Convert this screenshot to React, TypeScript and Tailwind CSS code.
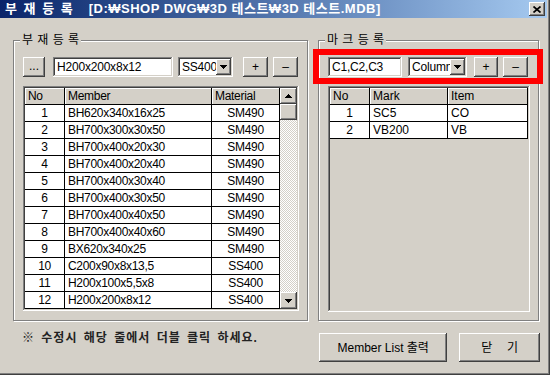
import React from "react"

const raised =
  "bg-[#d4d0c8] shadow-[inset_-1px_-1px_#404040,inset_1px_1px_#fff,inset_-2px_-2px_#808080,inset_2px_2px_#d4d0c8]"
const sunken =
  "shadow-[inset_-1px_-1px_#fff,inset_1px_1px_#808080,inset_-2px_-2px_#d4d0c8,inset_2px_2px_#404040]"
const etched = "border border-[#808080] shadow-[inset_1px_1px_#fff,1px_1px_#fff]"

const members = [
  ["1", "BH620x340x16x25", "SM490"],
  ["2", "BH700x300x30x50", "SM490"],
  ["3", "BH700x400x20x30", "SM490"],
  ["4", "BH700x400x20x40", "SM490"],
  ["5", "BH700x400x30x40", "SM490"],
  ["6", "BH700x400x30x50", "SM490"],
  ["7", "BH700x400x40x50", "SM490"],
  ["8", "BH700x400x40x60", "SM490"],
  ["9", "BX620x340x25", "SM490"],
  ["10", "C200x90x8x13,5", "SS400"],
  ["11", "H200x100x5,5x8", "SS400"],
  ["12", "H200x200x8x12", "SS400"],
]

const marks = [
  ["1", "SC5", "CO"],
  ["2", "VB200", "VB"],
]

const Arrow = ({ up }: { up?: boolean }) => (
  <svg width="7" height="4" viewBox="0 0 7 4" shapeRendering="crispEdges">
    {up ? (
      <>
        <rect x="3" y="0" width="1" height="1" />
        <rect x="2" y="1" width="3" height="1" />
        <rect x="1" y="2" width="5" height="1" />
        <rect x="0" y="3" width="7" height="1" />
      </>
    ) : (
      <>
        <rect x="0" y="0" width="7" height="1" />
        <rect x="1" y="1" width="5" height="1" />
        <rect x="2" y="2" width="3" height="1" />
        <rect x="3" y="3" width="1" height="1" />
      </>
    )}
  </svg>
)

const Btn = ({ label, className }: { label: string; className: string }) => (
  <div className={`${raised} ${className} flex items-center justify-center leading-none`}>{label}</div>
)

const Combo = ({ value, className }: { value: string; className: string }) => (
  <div className={`${sunken} ${className} bg-white h-[20px] p-[2px] flex`}>
    <div className="flex-1 min-w-0 overflow-hidden whitespace-nowrap pl-[2px] leading-[16px] text-[12px] tracking-[-0.2px]">
      {value}
    </div>
    <div className={`${raised} w-[15px] h-[16px] shrink-0 flex items-center justify-center`}>
      <Arrow />
    </div>
  </div>
)

const Field = ({ value, className }: { value: string; className: string }) => (
  <div
    className={`${sunken} ${className} bg-white h-[20px] pl-[4px] pt-[2px] leading-[16px] text-[12px] tracking-[-0.2px] whitespace-nowrap overflow-hidden`}
  >
    {value}
  </div>
)

const HeadCell = ({ label, w }: { label: string; w: string }) => (
  <div className={`${w} h-full pl-[3px] border-r border-black shadow-[inset_1px_1px_#fff] bg-[#d4d0c8]`}>{label}</div>
)

const App = () => {
  return (
    <div className="w-[550px] h-[375px] bg-[#d4d0c8] flex flex-col pr-[3px] pb-[3px] overflow-hidden text-[12px] text-black font-['Liberation_Sans','Noto_Sans_CJK_KR',sans-serif] shadow-[inset_-1px_-1px_#404040,inset_-2px_-2px_#808080]">
      {/* title bar */}
      <div className="h-[18px] shrink-0 bg-linear-to-r from-[#0a246a] to-[#a6caf0] flex items-center pl-[5px] pr-[2px] text-white font-bold text-[13px] whitespace-nowrap">
        <span className="[word-spacing:3px]">부 재 등 록</span>
        <span className="ml-[16px] tracking-[0.5px]">[D:₩SHOP DWG₩3D 테스트₩3D 테스트.MDB]</span>
        <div className={`${raised} ml-auto w-[16px] h-[14px] flex items-center justify-center`}>
          <svg width="8" height="7" viewBox="0 0 8 7">
            <path d="M0.5 0.5L7.5 6.5M7.5 0.5L0.5 6.5" stroke="#000" strokeWidth="1.7" />
          </svg>
        </div>
      </div>

      <div className="flex">
        {/* left column */}
        <div className="ml-[13px] w-[296px] flex flex-col">
          <div className={`relative mt-[22px] w-[295px] h-[281px] ${etched} pl-[9px] pt-[16px]`}>
            <span className="absolute -top-[8px] left-[6px] px-[2px] bg-[#d4d0c8] leading-[14px] text-[12px] [word-spacing:1px]">
              부 재 등 록
            </span>
            <div className="flex items-center h-[20px]">
              <Btn label="..." className="w-[22px] h-[20px] pb-[3px]" />
              <Field value="H200x200x8x12" className="ml-[8px] w-[120px]" />
              <Combo value="SS400" className="ml-[5px] w-[55px]" />
              <Btn label="+" className="ml-[10px] w-[25px] h-[20px]" />
              <Btn label="–" className="ml-[5px] w-[25px] h-[20px]" />
            </div>

            <div className={`${sunken} mt-[9px] w-[276px] h-[225px] p-[2px] flex bg-white`}>
              <div className="w-[255px] flex flex-col tracking-[-0.3px]">
                <div className="h-[17px] flex border-b border-black leading-[16px]">
                  <HeadCell label="No" w="w-[40px]" />
                  <HeadCell label="Member" w="w-[147px]" />
                  <HeadCell label="Material" w="w-[68px]" />
                </div>
                {members.map(([no, name, mat]) => (
                  <div key={no} className="h-[17px] flex border-b border-black leading-[16px]">
                    <div className="w-[40px] text-center border-r border-black">{no}</div>
                    <div className="w-[147px] pl-[3px] border-r border-black">{name}</div>
                    <div className="w-[68px] text-center border-r border-black">{mat}</div>
                  </div>
                ))}
              </div>
              {/* scrollbar */}
              <div className="flex-1 flex flex-col bg-[repeating-conic-gradient(#fff_0_25%,#d4d0c8_0_50%)] bg-[length:2px_2px]">
                <div className={`${raised} h-[16px] flex items-center justify-center`}>
                  <Arrow up />
                </div>
                <div className={`${raised} h-[16px]`} />
                <div className="flex-1" />
                <div className={`${raised} h-[17px] flex items-center justify-center`}>
                  <Arrow />
                </div>
              </div>
            </div>
          </div>
          <div className="ml-[9px] mt-[8px] font-bold text-[12px] text-[#222] tracking-[1px] [word-spacing:2px] whitespace-nowrap">
            ※ 수정시 해당 줄에서 더블 클릭 하세요.
          </div>
        </div>

        {/* right column */}
        <div className="ml-[9px] w-[222px] flex flex-col">
          <div className={`relative mt-[22px] w-[221px] h-[281px] ${etched} pl-[9px] pt-[16px]`}>
            <span className="absolute -top-[8px] left-[6px] px-[2px] bg-[#d4d0c8] leading-[14px] text-[12px] [word-spacing:1px]">
              마 크 등 록
            </span>
            <div className="flex items-center h-[20px]">
              <Field value="C1,C2,C3" className="w-[74px]" />
              <Combo value="Column" className="ml-[6px] w-[59px]" />
              <Btn label="+" className="ml-[7px] w-[24px] h-[20px]" />
              <Btn label="–" className="ml-[5px] w-[25px] h-[20px]" />
            </div>
            {/* annotation */}
            <div className="absolute left-[-6px] top-[8px] w-[230px] h-[35px] border-[6px] border-[#ff0000]" />

            <div className={`${sunken} mt-[9px] w-[202px] h-[226px] p-[2px] bg-[#d4d0c8]`}>
              <div className="w-[198px] flex flex-col">
                <div className="h-[17px] flex border-b border-black leading-[16px]">
                  <HeadCell label="No" w="w-[40px]" />
                  <HeadCell label="Mark" w="w-[78px]" />
                  <HeadCell label="Item" w="w-[80px]" />
                </div>
                {marks.map(([no, mark, item]) => (
                  <div key={no} className="h-[17px] flex border-b border-black leading-[16px] bg-white">
                    <div className="w-[40px] text-center border-r border-black">{no}</div>
                    <div className="w-[78px] pl-[3px] border-r border-black">{mark}</div>
                    <div className="w-[80px] pl-[3px] border-r border-black">{item}</div>
                  </div>
                ))}
              </div>
            </div>
          </div>
          <div className="mt-[12px] ml-[1px] flex">
            <Btn label="Member List 출력" className="w-[129px] h-[29px] text-[12px]" />
            <Btn label="닫  기" className="ml-[12px] w-[81px] h-[29px] text-[12px] [word-spacing:4px] whitespace-pre" />
          </div>
        </div>
      </div>
    </div>
  )
}

export default App
